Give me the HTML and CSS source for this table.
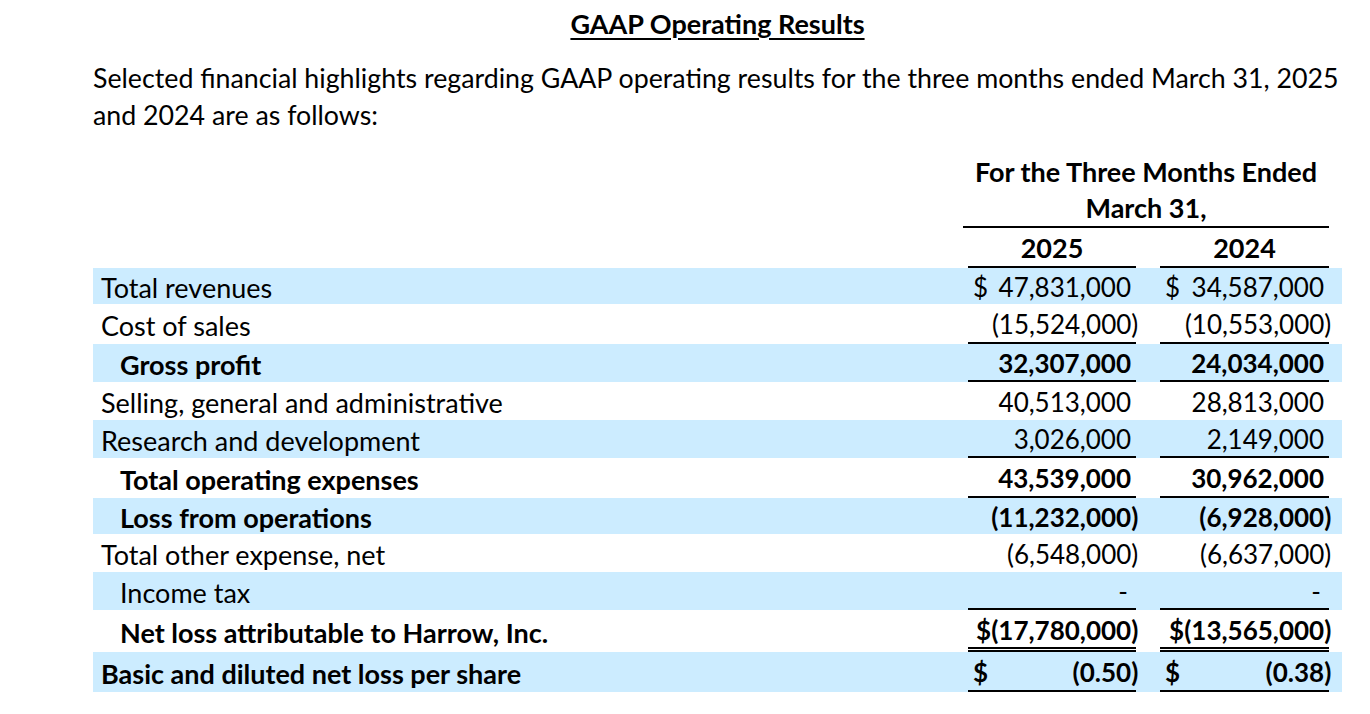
FILE: index.html
```html
<!DOCTYPE html>
<html lang="en">
<head>
<meta charset="utf-8">
<title>GAAP Operating Results</title>
<link rel="stylesheet" href="styles.css">
</head>
<body>
<div class="page">
  <h1 class="title">GAAP Operating Results</h1>
  <p class="intro">Selected financial highlights regarding GAAP operating results for the three months ended March 31, 2025<br>and 2024 are as follows:</p>

  <div class="fin">
    <div class="row head-row">
      <div class="label"></div>
      <div class="period">
        <span>For the Three Months Ended</span>
        <span>March 31,</span>
      </div>
    </div>
    <div class="row year-row">
      <div class="label"></div>
      <div class="year">2025</div>
      <div class="year">2024</div>
    </div>

    <div class="row band row--compact">
      <div class="label">Total revenues</div>
      <div class="val split"><span>$</span><span class="num">47,831,000</span></div>
      <div class="val split"><span>$</span><span class="num">34,587,000</span></div>
    </div>
    <div class="row row--roomy">
      <div class="label">Cost of sales</div>
      <div class="val rule"><span class="num">(15,524,000<span class="rp">)</span></span></div>
      <div class="val rule"><span class="num">(10,553,000<span class="rp">)</span></span></div>
    </div>
    <div class="row band strong">
      <div class="label indent">Gross profit</div>
      <div class="val rule"><span class="num">32,307,000</span></div>
      <div class="val rule"><span class="num">24,034,000</span></div>
    </div>
    <div class="row">
      <div class="label">Selling, general and administrative</div>
      <div class="val"><span class="num">40,513,000</span></div>
      <div class="val"><span class="num">28,813,000</span></div>
    </div>
    <div class="row band">
      <div class="label">Research and development</div>
      <div class="val rule"><span class="num">3,026,000</span></div>
      <div class="val rule"><span class="num">2,149,000</span></div>
    </div>
    <div class="row row--roomy strong">
      <div class="label indent">Total operating expenses</div>
      <div class="val rule"><span class="num">43,539,000</span></div>
      <div class="val rule"><span class="num">30,962,000</span></div>
    </div>
    <div class="row band row--compact strong">
      <div class="label indent">Loss from operations</div>
      <div class="val"><span class="num">(11,232,000<span class="rp">)</span></span></div>
      <div class="val"><span class="num">(6,928,000<span class="rp">)</span></span></div>
    </div>
    <div class="row">
      <div class="label">Total other expense, net</div>
      <div class="val"><span class="num">(6,548,000<span class="rp">)</span></span></div>
      <div class="val"><span class="num">(6,637,000<span class="rp">)</span></span></div>
    </div>
    <div class="row band">
      <div class="label indent">Income tax</div>
      <div class="val rule"><span class="num dash">-</span></div>
      <div class="val rule"><span class="num dash">-</span></div>
    </div>
    <div class="row row--total strong">
      <div class="label indent">Net loss attributable to Harrow, Inc.</div>
      <div class="val double"><span class="num">$(17,780,000<span class="rp">)</span></span></div>
      <div class="val double"><span class="num">$(13,565,000<span class="rp">)</span></span></div>
    </div>
    <div class="row band row--roomy strong">
      <div class="label">Basic and diluted net loss per share</div>
      <div class="val split rule"><span>$</span><span class="num">(0.50<span class="rp">)</span></span></div>
      <div class="val split rule"><span>$</span><span class="num">(0.38<span class="rp">)</span></span></div>
    </div>
  </div>
</div>
</body>
</html>
```

FILE: styles.css
```css
* { box-sizing: border-box; }

html, body {
  margin: 0;
  padding: 0;
  background: #ffffff;
}

body {
  font-family: Lato, "Liberation Sans", sans-serif;
  font-size: 27px;
  color: #000000;
}

.page {
  width: 1249px;
  margin-left: 93px;
  padding-top: 6px;
}

.title {
  margin: 0;
  font-size: 27px;
  font-weight: 700;
  line-height: 36px;
  text-align: center;
  text-decoration: underline;
  text-decoration-thickness: 2px;
  text-underline-offset: 4px;
}

.intro {
  margin: 18px 0 0 0;
  font-size: 26.75px;
  line-height: 37px;
  white-space: nowrap;
}

.fin {
  margin-top: 20px;
}

.row {
  display: grid;
  grid-template-columns: 851px 168px 169px;
  column-gap: 24px;
  padding-right: 13px;
  height: 38px;
  align-items: stretch;
}

.row--compact { height: 36px; }
.row--roomy { height: 40px; }
.row--total { height: 42px; }

.band { background: #ccecff; }

.strong { font-weight: 700; }

.label {
  display: flex;
  align-items: center;
  padding-left: 8px;
  padding-top: 2px;
  white-space: nowrap;
}

.label.indent { padding-left: 27px; }

.head-row {
  height: auto;
}

.period {
  grid-column: 2 / 4;
  display: flex;
  flex-direction: column;
  align-items: center;
  font-weight: 700;
  line-height: 36px;
  white-space: nowrap;
  border-bottom: 2px solid #000;
  margin-left: -5px;
}

.year-row { height: 40px; }

.year {
  display: flex;
  align-items: center;
  justify-content: center;
  font-weight: 700;
  border-bottom: 2px solid #000;
}

.val {
  display: flex;
  align-items: center;
  justify-content: flex-end;
  padding: 2px 5px 0 5px;
  font-size: 26px;
  white-space: nowrap;
}

.val.split { justify-content: space-between; }

.val.rule { border-bottom: 2px solid #000; }

.val.double { border-bottom: 5px double #000; }

.rp { margin-right: -0.28em; }

.dash { padding-right: 3px; }
```
